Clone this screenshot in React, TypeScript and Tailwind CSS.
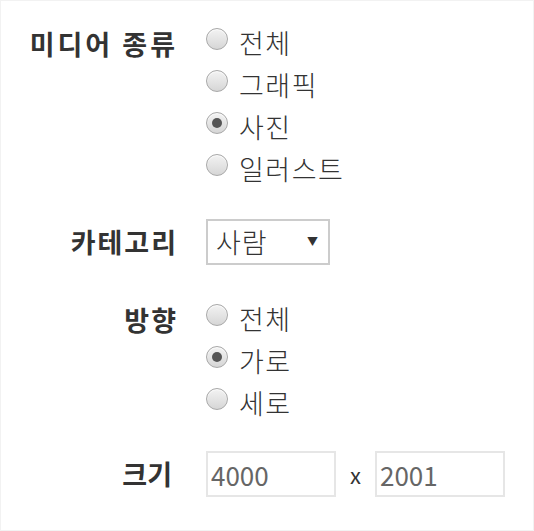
import { useState } from "react";

const font = { fontFamily: '"Noto Sans CJK KR", "Noto Sans", sans-serif' };

interface RadioProps {
  label: string;
  checked: boolean;
  onSelect: () => void;
}

const Radio: React.FC<RadioProps> = ({ label, checked, onSelect }) => (
  <div className="flex h-[42px] cursor-pointer items-center" onClick={onSelect}>
    <span className="mb-[6px] flex h-[22px] w-[22px] items-center justify-center rounded-full border border-[#a8a8a8] bg-linear-to-b from-[#f3f3f3] to-[#d6d6d6] shadow-[inset_0_1px_1px_rgba(255,255,255,0.8)]">
      {checked && <span className="h-[10px] w-[10px] rounded-full bg-[#555]" />}
    </span>
    <span className="ml-[11px] text-[27px] leading-none font-light tracking-[1.5px] text-[#333]">{label}</span>
  </div>
);

export default function App() {
  const [media, setMedia] = useState<string>("사진");
  const [dir, setDir] = useState<string>("가로");
  const [category, setCategory] = useState<string>("사람");
  const [width, setWidth] = useState<string>("4000");
  const [height, setHeight] = useState<string>("2001");

  const medias = ["전체", "그래픽", "사진", "일러스트"];
  const dirs = ["전체", "가로", "세로"];

  return (
    <div style={font} className="h-[531px] w-[534px] border border-[#f2f2f2] bg-white pt-[20px]">
      <div className="grid grid-cols-[177px_1fr] gap-x-[28px]">
        <div className="h-[42px] text-right text-[27px] font-bold leading-[46px] tracking-[3px] text-[#333]">미디어 종류</div>
        <div className="flex flex-col">
          {medias.map((m) => (
            <Radio key={m} label={m} checked={media === m} onSelect={() => setMedia(m)} />
          ))}
        </div>

        <div className="mt-[30px] flex h-[46px] items-center justify-end text-[27px] font-bold tracking-[2px] text-[#333]">카테고리</div>
        <div className="relative mt-[30px] h-[46px] w-[124px]">
          <select
            value={category}
            onChange={(e) => setCategory(e.target.value)}
            className="h-full w-full appearance-none border-2 border-[#cccccc] bg-white pl-[8px] text-[27px] font-light tracking-[1px] text-[#333] outline-none"
          >
            <option>사람</option>
            <option>동물</option>
            <option>풍경</option>
          </select>
          <span className="pointer-events-none absolute right-[12px] top-[14px] text-[11px] text-[#333]">▼</span>
        </div>

        <div className="mt-[32px] h-[42px] text-right text-[27px] font-bold leading-[46px] tracking-[2px] text-[#333]">방향</div>
        <div className="mt-[32px] flex flex-col">
          {dirs.map((d) => (
            <Radio key={d} label={d} checked={dir === d} onSelect={() => setDir(d)} />
          ))}
        </div>

        <div className="mt-[28px] flex h-[46px] items-center justify-end pr-[6px] text-[27px] font-bold text-[#333]">크기</div>
        <div className="mt-[28px] flex h-[46px] items-center">
          <input
            value={width}
            onChange={(e) => setWidth(e.target.value)}
            className="h-full w-[130px] border-2 border-[#e6e6e6] pl-[3px] text-[26px] text-[#666] outline-none"
          />
          <span className="mx-[14px] text-[22px] text-[#333]">x</span>
          <input
            value={height}
            onChange={(e) => setHeight(e.target.value)}
            className="h-full w-[130px] border-2 border-[#e6e6e6] pl-[3px] text-[26px] text-[#666] outline-none"
          />
        </div>
      </div>
    </div>
  );
}
